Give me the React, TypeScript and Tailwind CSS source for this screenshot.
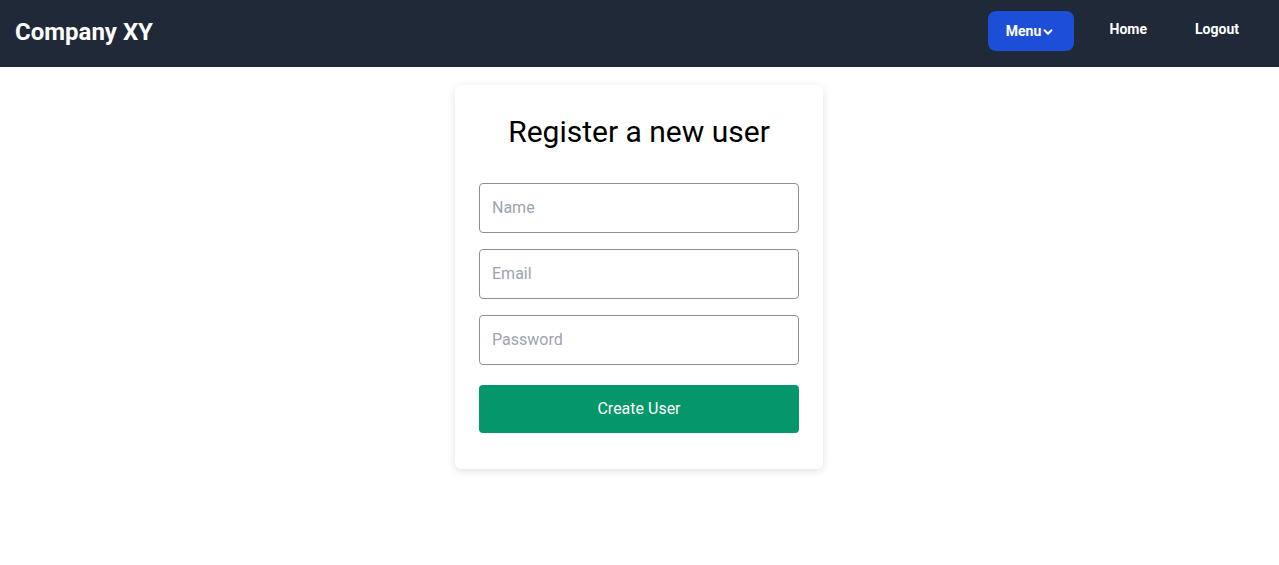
import React from "react";
import { ChevronDown } from "lucide-react";

export default function App() {
  const fields = [
    { placeholder: "Name", type: "text" },
    { placeholder: "Email", type: "email" },
    { placeholder: "Password", type: "password" },
  ];

  return (
    <div className="min-h-screen bg-white font-['Roboto',sans-serif]">
      <header className="h-[67px] bg-[#1f2937] flex items-center justify-between pl-[15px] pr-4">
        <h1 className="text-2xl font-bold text-white -mt-[3px]">Company XY</h1>
        <nav className="flex items-center">
          <button className="h-10 w-[86px] bg-[#1d4ed8] rounded-lg text-white text-sm font-bold flex items-center justify-center mr-3 mt-[-5px]">
            Menu
            <ChevronDown size={14} strokeWidth={3.5} className="mt-[1px]" />
          </button>
          <a className="px-6 text-sm font-bold text-white -mt-[9px]">Home</a>
          <a className="px-6 text-sm font-bold text-white -mt-[9px]">Logout</a>
        </nav>
      </header>

      <main className="flex justify-center pt-[18px] pr-px">
        <div className="w-[368px] bg-white rounded-md shadow-[0_2px_8px_rgba(0,0,0,0.12)] px-6 pt-[29px] pb-9">
          <h2 className="text-3xl text-black text-center mb-[33px]">
            Register a new user
          </h2>
          <form className="flex flex-col gap-4">
            {fields.map((f) => (
              <input
                key={f.placeholder}
                type={f.type}
                placeholder={f.placeholder}
                className="h-[50px] w-full border border-[#8f8f8f] rounded px-3 pb-px text-base text-gray-900 placeholder:text-[#9ca3af] outline-none"
              />
            ))}
            <button
              type="button"
              className="mt-1 h-12 w-full bg-[#059669] rounded text-white text-base"
            >
              Create User
            </button>
          </form>
        </div>
      </main>
    </div>
  );
}
